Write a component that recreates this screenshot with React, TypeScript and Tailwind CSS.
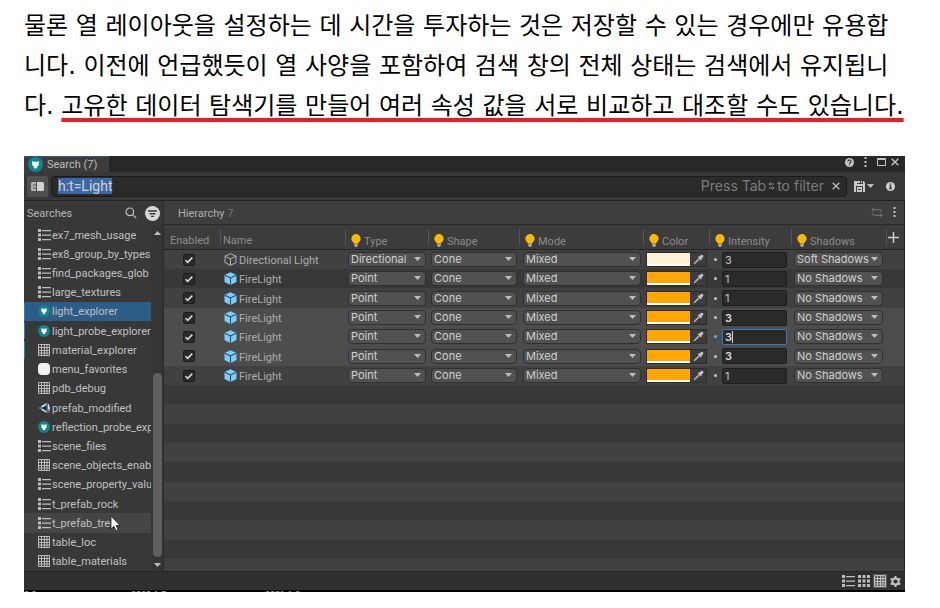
import { useEffect, useRef } from "react";
import type { ReactNode } from "react";

type IconKind = "list" | "light" | "grid" | "blank" | "unity";

const searches: { name: string; icon: IconKind; state?: "selected" | "hover"; marked?: boolean }[] = [
  { name: "ex7_mesh_usage", icon: "list" },
  { name: "ex8_group_by_types", icon: "list" },
  { name: "find_packages_glob", icon: "list" },
  { name: "large_textures", icon: "list" },
  { name: "light_explorer", icon: "light", state: "selected", marked: true },
  { name: "light_probe_explorer", icon: "light", marked: true },
  { name: "material_explorer", icon: "grid", marked: true },
  { name: "menu_favorites", icon: "blank" },
  { name: "pdb_debug", icon: "grid" },
  { name: "prefab_modified", icon: "unity" },
  { name: "reflection_probe_exp", icon: "light" },
  { name: "scene_files", icon: "list" },
  { name: "scene_objects_enab", icon: "grid" },
  { name: "scene_property_valu", icon: "list" },
  { name: "t_prefab_rock", icon: "list" },
  { name: "t_prefab_tree", icon: "list", state: "hover" },
  { name: "table_loc", icon: "grid" },
  { name: "table_materials", icon: "grid" },
];

const rows = [
  { name: "Directional Light", type: "Directional", color: "bg-[#fff1d6]", intensity: "3", shadows: "Soft Shadows", bg: "bg-[#414141]" },
  { name: "FireLight", type: "Point", color: "bg-[#ffa600]", intensity: "1", shadows: "No Shadows", bg: "bg-[#383838]" },
  { name: "FireLight", type: "Point", color: "bg-[#ffa600]", intensity: "1", shadows: "No Shadows", bg: "bg-[#414141]" },
  { name: "FireLight", type: "Point", color: "bg-[#ffa600]", intensity: "3", shadows: "No Shadows", bg: "bg-[#4d4d4d]", bright: true },
  { name: "FireLight", type: "Point", color: "bg-[#ffa600]", intensity: "3", shadows: "No Shadows", bg: "bg-[#4d4d4d]", bright: true, editing: true },
  { name: "FireLight", type: "Point", color: "bg-[#ffa600]", intensity: "3", shadows: "No Shadows", bg: "bg-[#4d4d4d]", bright: true },
  { name: "FireLight", type: "Point", color: "bg-[#ffa600]", intensity: "1", shadows: "No Shadows", bg: "bg-[#414141]" },
];

function ListIcon() {
  return (
    <svg width="13" height="12" viewBox="0 0 13 12" fill="#bdbdbd" aria-hidden="true">
      <path d="M0 0h3v3H0zM0 4.5h3v3H0zM0 9h3v3H0zM4 1h9v1.3H4zM4 5.5h9v1.3H4zM4 10h9v1.3H4z" />
    </svg>
  );
}

function GridIcon() {
  return (
    <svg width="12" height="12" viewBox="0 0 12 12" fill="none" stroke="#bdbdbd" aria-hidden="true">
      <path d="M.5.5h11v11H.5zM.5 3.5h11M.5 6.5h11M.5 9h11M3.5.5v11M6.5.5v11M9 .5v11" />
    </svg>
  );
}

function LightIcon({ size }: { size: number }) {
  return (
    <svg width={size} height={size} viewBox="0 0 16 16" aria-hidden="true">
      <circle cx="8" cy="8" r="8" fill="#128391" />
      <path d="M4.600 4 6.200 5h3.600l1.600-1 .2 4.400-1.800 1.600v1.400L8 12.400l-1.800-1V10L4.400 8.400z" fill="#fff" />
    </svg>
  );
}

function UnityIcon() {
  return (
    <svg width="12" height="12" viewBox="0 0 12 12" aria-hidden="true">
      <path d="M0 6 3.500 4 8.500 1 10.500 1.200 11.500 5v5l-1.500 1.200-2-.4L3.500 8z" fill="#55748a" />
      <path d="M3.500 4 8.500 1l-1.700 3L4 5.500zM3.500 8 4 6.500l3 1.500 1.500 2.800zM10.300 1.300 11.600 5v4.500L9.800 6z" fill="#dde7ed" />
      <path d="M4.500 5.500 8 4l1 2-1.500 2.500L4.500 6.700z" fill="#1c2f3d" />
    </svg>
  );
}

function SearchIcon({ kind }: { kind: IconKind }) {
  if (kind === "list") return <ListIcon />;
  if (kind === "grid") return <GridIcon />;
  if (kind === "light") return <LightIcon size={12} />;
  if (kind === "unity") return <UnityIcon />;
  return <span className="block size-3 rounded bg-[#f2f2f2]" />;
}

function Bulb() {
  return (
    <svg width="10" height="13" viewBox="0 0 10 13" className="shrink-0" aria-hidden="true">
      <path d="M5 0a4.700 4.700 0 0 1 4.700 4.700C9.700 7 7.600 7.800 7 9.700H3C2.400 7.800.3 7 .3 4.700A4.700 4.700 0 0 1 5 0z" fill="#f8b90c" />
      <path d="M3.200 10.200h3.600v1.600L6 12.800H4l-.8-1z" fill="#b5b5b5" />
    </svg>
  );
}

function Cube({ outline }: { outline?: boolean }) {
  return outline ? (
    <svg width="13" height="13" viewBox="0 0 13 13" fill="none" stroke="#b4b4b4" strokeLinejoin="round" className="shrink-0" aria-hidden="true">
      <path d="M6.500.7 12 3.200v6.400l-5.500 2.700L1 9.600V3.200zM1 3.200l5.500 2.700L12 3.200M6.500 5.900v6.400" />
    </svg>
  ) : (
    <svg width="13" height="13" viewBox="0 0 13 13" className="shrink-0" aria-hidden="true">
      <path d="M6.500.2 12.500 3v7l-6 2.900L.5 10V3z" fill="#7bcdfb" />
      <path d="M.8 3.200 6.500 6l5.700-2.800M6.500 6v6.700" fill="none" stroke="#2f4b5d" strokeWidth="1.100" />
    </svg>
  );
}

function Dropper() {
  return (
    <svg width="11" height="11" viewBox="0 0 11 11" aria-hidden="true">
      <path d="M6.200 2.800 8 1a1.500 1.500 0 0 1 2.100 2.100L8.300 4.900l.5.600-1 1L4.700 3.300l1-1z" fill="#c4c4c4" />
      <path d="M5.700 4.700 2.200 8.200 1 10l1.800-1.200 3.500-3.500" fill="#c4c4c4" stroke="#c4c4c4" strokeWidth=".8" />
    </svg>
  );
}

function Dots() {
  return (
    <svg width="3" height="11" viewBox="0 0 3 11" fill="#c4c4c4" aria-hidden="true">
      <path d="M.5 0h2v2h-2zM.5 4h2v2h-2zM.5 8h2v2h-2z" />
    </svg>
  );
}

function Caret() {
  return (
    <svg width="7" height="4" viewBox="0 0 7 4" fill="#bdbdbd" aria-hidden="true">
      <path d="M0 0h7L3.500 4z" />
    </svg>
  );
}

function Dropdown({ label, value }: { label: string; value: string }) {
  return (
    <div className="relative h-[15px] rounded-sm border border-[#303030] bg-[#515151]">
      <select aria-label={label} defaultValue={value} className="block h-full w-full appearance-none pl-0.5 text-[11px] leading-[13px] text-[#d0d0d0] outline-none">
        <option>{value}</option>
      </select>
      <span className="pointer-events-none absolute top-1 right-1">
        <Caret />
      </span>
    </div>
  );
}

function HeadCell({ children, bulb }: { children: ReactNode; bulb?: boolean }) {
  return (
    <th scope="col" className="p-0 text-left font-normal">
      <div className="flex h-6 items-center">
        <span className="h-4 w-px bg-[#575757]" />
        <span className={bulb ? "flex items-center gap-[3px] pt-1.5 pl-[5px]" : "pt-2 pl-0.5"}>
          {bulb && <Bulb />}
          <span className={bulb ? "pt-[3px]" : ""}>{children}</span>
        </span>
      </div>
    </th>
  );
}

function Sidebar() {
  return (
    <aside className="flex w-[140px] shrink-0 flex-col border-r border-[#2a2a2a] bg-[#383838] font-['Roboto',sans-serif]">
      <div className="flex h-6 shrink-0 items-center pr-[3px] pl-[3px]">
        <h2 className="flex-1 pt-0.5 text-[11px] text-[#b4b4b4]">Searches</h2>
        <button type="button" aria-label="Find a search" className="mr-2">
          <svg width="12" height="12" viewBox="0 0 12 12" fill="none" stroke="#c4c4c4" strokeWidth="1.200" aria-hidden="true">
            <circle cx="4.800" cy="4.800" r="3.800" />
            <path d="m7.600 7.600 3.600 3.600" />
          </svg>
        </button>
        <button type="button" aria-label="Sort searches">
          <svg width="15" height="15" viewBox="0 0 15 15" aria-hidden="true">
            <circle cx="7.500" cy="7.500" r="7.500" fill="#d8d8d8" />
            <path d="M3 5h9M4.500 7.700h6M6 10.400h3" stroke="#383838" strokeWidth="1.400" />
          </svg>
        </button>
      </div>
      <div className="flex min-h-0 flex-1">
        <ul className="flex min-w-0 flex-1 flex-col">
          {searches.map((s) => (
            <li key={s.name} className={`flex min-h-[19px] flex-1 ${s.state === "selected" ? "bg-[#2c5d87]" : s.state === "hover" ? "bg-[#454545]" : ""}`}>
              <span className={`my-px w-px shrink-0 ${s.marked ? "bg-[#1583cc]" : ""}`} />
              <button type="button" className="relative flex min-w-0 flex-1 items-center gap-px pl-[13px] text-[#c0c0c0]">
                <span className="flex w-[13px] shrink-0">
                  <SearchIcon kind={s.icon} />
                </span>
                <span className="overflow-hidden pt-0.5 whitespace-nowrap">{s.name}</span>
                {s.state === "hover" && (
                  <svg width="11" height="17" viewBox="0 0 11 17" className="absolute top-0.5 left-[85px]" aria-hidden="true">
                    <path d="M1 1v13l3-2.800 2 4.800 2.200-1-2-4.500H10z" fill="#fff" stroke="#1b1b1b" strokeWidth=".8" />
                  </svg>
                )}
              </button>
            </li>
          ))}
        </ul>
        <div className="flex w-3 shrink-0 flex-col items-center bg-[#353535] pt-1.5 pb-1">
          <span className="rotate-180"><Caret /></span>
          <span className="mt-[138px] mb-1.5 w-[9px] flex-1 rounded-full bg-[#5f5f5f]" />
          <Caret />
        </div>
      </div>
    </aside>
  );
}

function LightTable() {
  return (
    <table className="w-full table-fixed border-collapse">
      <colgroup>
        <col className="w-14" />
        <col />
        <col className="w-[83px]" />
        <col className="w-[91px]" />
        <col className="w-[124px]" />
        <col className="w-[66px]" />
        <col className="w-[82px]" />
        <col className="w-[95px]" />
        <col className="w-[18px]" />
      </colgroup>
      <thead>
        <tr className="border-b border-[#252525] bg-[#3c3c3c] font-['Roboto',sans-serif] text-[#8c8c8c]">
          <th scope="col" className="p-0 pt-2 pl-1.5 text-left font-normal">Enabled</th>
          <HeadCell>Name</HeadCell>
          <HeadCell bulb>Type</HeadCell>
          <HeadCell bulb>Shape</HeadCell>
          <HeadCell bulb>Mode</HeadCell>
          <HeadCell bulb>Color</HeadCell>
          <HeadCell bulb>Intensity</HeadCell>
          <HeadCell bulb>Shadows</HeadCell>
          <HeadCell>
            <button type="button" aria-label="Add column" className="-mt-2 -ml-px block">
              <svg width="11" height="11" viewBox="0 0 11 11" stroke="#d0d0d0" strokeWidth="1.500" aria-hidden="true">
                <path d="M5.500 0v11M0 5.500h11" />
              </svg>
            </button>
          </HeadCell>
        </tr>
      </thead>
      <tbody>
        {rows.map((r, i) => (
          <tr key={i} className={`${r.bg} ${i % 3 === 2 ? "h-5" : "h-[19px]"}`}>
            <td className="p-0">
              <label className="relative ml-[19px] block size-3">
                <input type="checkbox" defaultChecked aria-label={`Enable ${r.name} ${i + 1}`} className="block size-3 appearance-none rounded-xs border border-[#1c1c1c] bg-[#2a2a2a]" />
                <svg width="12" height="12" viewBox="0 0 12 12" className="pointer-events-none absolute inset-0" fill="none" stroke="#d8d8d8" strokeWidth="1.600" aria-hidden="true">
                  <path d="m2.500 6.200 2.200 2.200 4.600-4.800" />
                </svg>
              </label>
            </td>
            <td className="p-0">
              <div className="flex items-center gap-0.5 pl-1 font-['Roboto',sans-serif] whitespace-nowrap text-[#acacac]">
                <Cube outline={i === 0} />
                <span className="pt-[3px]">{r.name}</span>
              </div>
            </td>
            <td className="py-0 pr-0.5 pl-[3px]"><Dropdown label="Type" value={r.type} /></td>
            <td className="py-0 pr-0.5 pl-[3px]"><Dropdown label="Shape" value="Cone" /></td>
            <td className="py-0 pr-0.5 pl-1"><Dropdown label="Mode" value="Mixed" /></td>
            <td className="p-0 pr-0.5 pl-[3px]">
              <div className="flex h-[15px] border border-[#2c2c2c]">
                <button type="button" aria-label="Pick color" className={`w-[43px] border-b-2 border-white ${r.color}`} />
                <button type="button" aria-label="Sample color" className="flex flex-1 items-center justify-center bg-[#3c3c3c]">
                  <Dropper />
                </button>
              </div>
            </td>
            <td className="p-0 pr-1 pl-[5px]">
              <div className="flex items-center gap-[5px]">
                <span className={`size-[3px] shrink-0 rounded-full ${r.editing ? "bg-[#6fb1e8]" : "bg-[#c4c4c4]"}`} />
                <div className="relative min-w-0 flex-1">
                  <input
                    type="text"
                    aria-label="Intensity"
                    defaultValue={r.intensity}
                    className={`block h-4 w-full rounded-xs border bg-[#2a2a2a] pl-0.5 leading-[14px] outline-none ${r.editing ? "border-[#3a79bb]" : "border-[#1e1e1e]"} ${r.bright ? "font-semibold text-[#dcdcdc]" : "text-[#c4c4c4]"}`}
                  />
                  {r.editing && <span className="absolute top-0.5 left-2.5 h-3 w-px bg-[#d8d8d8]" />}
                </div>
              </div>
            </td>
            <td className="py-0 pr-[3px] pl-[3px]"><Dropdown label="Shadows" value={r.shadows} /></td>
            <td className="p-0" />
          </tr>
        ))}
      </tbody>
    </table>
  );
}

function SearchWindow() {
  const query = useRef<HTMLInputElement>(null);
  useEffect(() => {
    query.current?.focus();
    query.current?.select();
  }, []);

  return (
    <section className="mr-[35px] ml-6 bg-[#383838] font-['Inter',sans-serif] text-[11px] leading-4">
      <div className="flex h-4 items-center bg-[#282828] pr-1.5">
        <div className="flex h-4 w-[85px] items-center gap-1 border-t border-[#2c5d87] bg-[#3c3c3c] pl-1 font-['Roboto',sans-serif] text-[#bdbdbd]">
          <LightIcon size={15} />
          <span>Search (7)</span>
        </div>
        <div className="ml-auto flex items-center gap-2 pb-1">
          <button type="button" aria-label="Help">
            <svg width="9" height="9" viewBox="0 0 9 9" aria-hidden="true">
              <circle cx="4.500" cy="4.500" r="4.500" fill="#c4c4c4" />
              <path d="M3 3.500a1.500 1.500 0 1 1 2 1.400c-.4.200-.5.400-.5.900M4.500 6.500v1" fill="none" stroke="#282828" strokeWidth="1.100" />
            </svg>
          </button>
          <button type="button" aria-label="Window menu" className="px-0.5"><Dots /></button>
          <button type="button" aria-label="Maximize">
            <svg width="9" height="8" viewBox="0 0 9 8" fill="none" stroke="#c4c4c4" aria-hidden="true">
              <path d="M.5.500h8v7h-8zM.5 1.500h8" />
            </svg>
          </button>
          <button type="button" aria-label="Close" className="-ml-[3px]">
            <svg width="8" height="8" viewBox="0 0 8 8" stroke="#c4c4c4" strokeWidth="1.400" aria-hidden="true">
              <path d="m.7.700 6.600 6.600M7.300.700.700 7.300" />
            </svg>
          </button>
        </div>
      </div>

      <div className="flex h-[29px] items-center border-b border-[#242424] pr-2.5 pl-[3px]">
        <button type="button" aria-label="Toggle searches panel" className="mr-[3px] flex size-[21px] items-center justify-center rounded-xs bg-[#505050]">
          <svg width="13" height="9" viewBox="0 0 13 9" aria-hidden="true">
            <path d="M6 0h5.500Q13 0 13 1.500v6Q13 9 11.500 9H6z" fill="#d0d0d0" />
            <path d="M1.500 0H5v9H1.500Q0 9 0 7.500v-6Q0 0 1.500 0z" fill="#b0b0b0" />
            <path d="M2 3h3M2 6h3" stroke="#505050" strokeWidth="1.200" />
          </svg>
        </button>
        <div className="flex h-[21px] flex-1 items-center rounded-sm border border-[#1b1b1b] bg-[#2a2a2a] pr-1.5 pl-1.5">
          <input
            ref={query}
            type="text"
            aria-label="Search query"
            defaultValue="h:t=Light"
            className="min-w-0 flex-1 font-['Roboto',sans-serif] text-sm leading-4 text-[#d2d2d2] outline-none selection:bg-[#3c68a6] selection:text-[#d2d2d2]"
          />
          <span className="flex items-center gap-[3px] text-sm leading-4 text-[#7c7c7c]">
            Press Tab
            <svg width="5" height="8" viewBox="0 0 5 8" fill="none" stroke="#8c8c8c" aria-hidden="true">
              <path d="M0 2h5M1.500.500 0 2l1.500 1.500M5 6H0M3.500 4.500 5 6 3.500 7.500" />
            </svg>
            to filter
          </span>
          <button type="button" aria-label="Clear query" className="ml-2">
            <svg width="8" height="8" viewBox="0 0 8 8" stroke="#b8b8b8" strokeWidth="1.300" aria-hidden="true">
              <path d="m.7.700 6.600 6.600M7.300.700.700 7.300" />
            </svg>
          </button>
        </div>
        <button type="button" aria-label="Save search" className="ml-[7px] flex items-center gap-0.5">
          <svg width="11" height="11" viewBox="0 0 11 11" aria-hidden="true">
            <path d="M0 0h9.500L11 1.500V11H0z" fill="#c8c8c8" />
            <path d="M2 0h1v3h6V0h-1v2H7V0H6v2H3V0zM2 5h7v6H8V6H3v5H2zM4 8h3v1H4z" fill="#404040" />
          </svg>
          <Caret />
        </button>
        <button type="button" aria-label="Information" className="ml-3">
          <svg width="9" height="9" viewBox="0 0 9 9" aria-hidden="true">
            <circle cx="4.500" cy="4.500" r="4.500" fill="#d0d0d0" />
            <path d="M3.700 1.500h1.600v1.300H3.700zM3.300 3.600h2v2.700H6v1H3.200v-1h.6V4.600h-.5z" fill="#303030" />
          </svg>
        </button>
      </div>

      <div className="flex">
        <Sidebar />
        <main className="flex min-w-0 flex-1 flex-col border-r border-[#252525]">
          <div className="flex h-6 items-center border-b border-[#2a2a2a] bg-[#3e3e3e] pr-2 pl-3.5">
            <h2 className="pt-0.5 font-['Roboto',sans-serif] text-[#b0b0b0]">Hierarchy <span className="text-[#777777]">7</span></h2>
            <button type="button" aria-label="Sync" className="mr-2.5 ml-auto">
              <svg width="12" height="11" viewBox="0 0 12 11" fill="none" stroke="#7a7a7a" aria-hidden="true">
                <path d="M3 .5.800 2.700 3 4.900M1 2.700h7.500A2.200 2.200 0 0 1 10.700 5M9 6.100l2.200 2.200L9 10.500M11 8.300H3.500A2.200 2.200 0 0 1 1.300 6" />
              </svg>
            </button>
            <button type="button" aria-label="View menu"><Dots /></button>
          </div>
          <LightTable />
          <div className="flex h-[174px] flex-col" aria-hidden="true">
            {Array.from({ length: 9 }, (_, i) => (
              <span key={i} className={`flex-1 ${i % 2 ? "bg-[#414141]" : "bg-[#383838]"}`} />
            ))}
          </div>
          <div className="h-3 bg-[#414141]" />
        </main>
      </div>

      <footer className="flex h-[19px] items-center justify-end gap-[3px] border-t border-[#252525] bg-[#303030] pr-1">
        <button type="button" aria-label="List view"><ListIcon /></button>
        <button type="button" aria-label="Thumbnail view">
          <svg width="12" height="12" viewBox="0 0 12 12" fill="#bdbdbd" aria-hidden="true">
            <path d="M0 0h3v3H0zM4.500 0h3v3h-3zM9 0h3v3H9zM0 4.500h3v3H0zM4.500 4.500h3v3h-3zM9 4.500h3v3H9zM0 9h3v3H0zM4.500 9h3v3h-3zM9 9h3v3H9z" />
          </svg>
        </button>
        <button type="button" aria-label="Table view" className="bg-[#585858] p-px"><GridIcon /></button>
        <button type="button" aria-label="Settings">
          <svg width="11" height="11" viewBox="0 0 11 11" aria-hidden="true">
            <circle cx="5.500" cy="5.500" r="3.100" fill="none" stroke="#c4c4c4" strokeWidth="2" />
            <path d="M5.500 0v2M5.500 9v2M.7 2.700l1.800 1M8.500 7.300l1.800 1M.7 8.300l1.800-1M8.500 3.700l1.800-1" stroke="#c4c4c4" strokeWidth="2" />
          </svg>
        </button>
      </footer>
      <div className="flex h-[2px] overflow-hidden bg-black font-['Liberation_Sans',sans-serif] text-[9px] leading-[9px] text-[#b0b0b0]">
        <span className="w-[107px]">0.0</span>
        <span className="w-[134px]">2020.1.7</span>
        <span>2021.1.0</span>
      </div>
    </section>
  );
}

export default function App() {
  return (
    <div className="bg-white pb-4">
      <p className="mb-[30px] pt-1.5 pl-6 font-['DejaVu_Sans','Noto_Sans_CJK_KR',sans-serif] text-2xl leading-10 text-black" lang="ko">
        <span className="block whitespace-nowrap">물론 열 레이아웃을 설정하는 데 시간을 투자하는 것은 저장할 수 있는 경우에만 유용합</span>
        <span className="block whitespace-nowrap">니다. 이전에 언급했듯이 열 사양을 포함하여 검색 창의 전체 상태는 검색에서 유지됩니</span>
        <span className="block whitespace-nowrap">
          다.{" "}
          <span className="underline decoration-[#ed1c24] decoration-4 underline-offset-4 [text-decoration-skip-ink:none]">
            고유한 데이터 탐색기를 만들어 여러 속성 값을 서로 비교하고 대조할 수도 있습니다.
          </span>
        </span>
      </p>
      <SearchWindow />
    </div>
  );
}
